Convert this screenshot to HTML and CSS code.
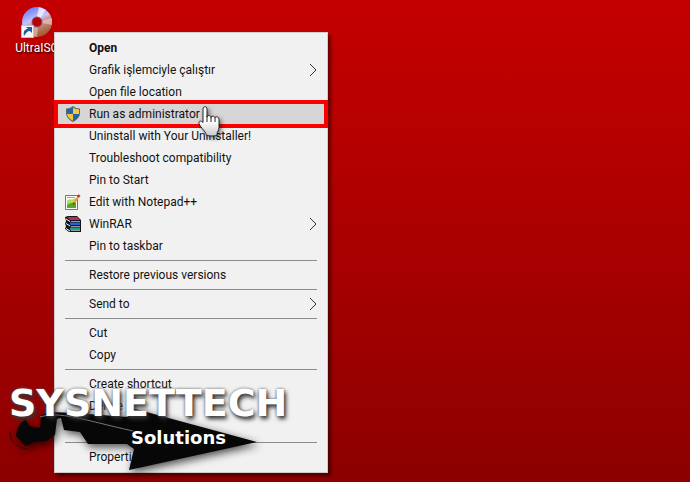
FILE: index.html
```html
<!DOCTYPE html>
<html lang="en">

<head>
    <meta charset="UTF-8">
    <meta name="viewport" content="width=device-width, initial-scale=1.0">
    <title>Desktop</title>
    <link rel="stylesheet" href="styles.css">
</head>

<body>
    <div class="desktop">
        <a class="shortcut" href="#">
            <svg class="disc" viewBox="0 0 32 32">
                <defs>
                    <linearGradient id="discfill" gradientUnits="userSpaceOnUse" x1="8" y1="3" x2="20" y2="30">
                        <stop offset="0" stop-color="#6f7df5"/>
                        <stop offset="0.4" stop-color="#c5c4ff"/>
                        <stop offset="0.55" stop-color="#c99a8c"/>
                        <stop offset="1" stop-color="#a4562f"/>
                    </linearGradient>
                </defs>
                <circle cx="16" cy="16" r="10" fill="none" stroke="url(#discfill)" stroke-width="10"/>
                <path d="M16 11L18 1L25 4L19 12z" fill="#fff" opacity=".7"/>
                <path d="M21 15L31 12V19L21 17z" fill="#f1d9e5" opacity=".5"/>
                <path d="M14 20L11 30L16 31L17 21z" fill="#f1d9c5" opacity=".5"/>
                <circle cx="16" cy="16" r="5" fill="#b30505" stroke="#8d5a7c"/>
                <path d="M.5 19.500h12v12h-12z" fill="#f4f8fc" stroke="#b8c4d0"/>
                <path d="M3 30C2 25 4 23 7 23L5 21H11V27L9 25C6 25 5 27 3 30z" fill="#1c5c9c"/>
            </svg>
            <span>UltraISO</span>
        </a>

        <ul class="menu">
            <li><button class="default">Open</button></li>
            <li><button>Grafik işlemciyle çalıştır
                <svg class="arrow" viewBox="0 0 8 14"><path d="M1 1l6 6-6 6"/></svg></button></li>
            <li><button>Open file location</button></li>
            <li><button class="active">
                <svg class="icon" viewBox="0 0 16 16">
                    <path d="M8 0C6 2 3 2.500 1 2.500V7c0 4 3 7 7 9 4-2 7-5 7-9V2.500C13 2.500 10 2 8 0z" fill="#5c6670"/>
                    <path d="M8 1.500C6 3 4 3.400 2 3.500V8h6z" fill="#1c66b4"/>
                    <path d="M8 1.500C10 3 12 3.400 14 3.500V8H8z" fill="#fbc736"/>
                    <path d="M2 8c.5 3 3 5.400 6 6.800V8z" fill="#fbc736"/>
                    <path d="M14 8c-.5 3-3 5.400-6 6.800V8z" fill="#1c66b4"/>
                </svg>Run as administrator</button></li>
            <li><button>Uninstall with Your Uninstaller!</button></li>
            <li><button>Troubleshoot compatibility</button></li>
            <li><button>Pin to Start</button></li>
            <li><button>
                <svg class="icon" viewBox="0 0 16 16">
                    <path d="M.5 1.500h12v14H.5z" fill="#fbfbf6" stroke="#777"/>
                    <path d="M2 6c3-1 6 0 9-2v9H2z" fill="#b6dd5c"/>
                    <path d="M2 11c3-3 6-1 9-4v7H2z" fill="#5da52a"/>
                    <path d="M2 3.500h8" stroke="#aaa"/>
                    <path d="M9 9l4-6" stroke="#e9a21c" stroke-width="2"/>
                    <path d="M13 3l1.500-2" stroke="#c22f35" stroke-width="2.500"/>
                    <path d="M8 11l.5-2.500 1.500 1z" fill="#333"/>
                </svg>Edit with Notepad++</button></li>
            <li><button>
                <svg class="icon" viewBox="0 0 16 16">
                    <path d="M0 1l3-1h9l4 4v12H4l-4-3 1-3-1-2 1-3z" fill="#151515"/>
                    <path d="M2 1h10l3 3H5z" fill="#b8286a"/>
                    <path d="M5 6.500h10v2.500H5z" fill="#2a5fd0"/>
                    <path d="M5 11.500h10v2.500H5z" fill="#12a68a"/>
                    <path d="M6 5.500h9M6 10.500h9M6 14.500h9" stroke="#999"/>
                    <path d="M1 3l4 2.500M1 7.500l4 2.500M1 12.500l4 2.500" stroke="#fff"/>
                </svg>WinRAR
                <svg class="arrow" viewBox="0 0 8 14"><path d="M1 1l6 6-6 6"/></svg></button></li>
            <li><button>Pin to taskbar</button></li>
            <li class="line"></li>
            <li><button>Restore previous versions</button></li>
            <li class="line"></li>
            <li><button>Send to
                <svg class="arrow" viewBox="0 0 8 14"><path d="M1 1l6 6-6 6"/></svg></button></li>
            <li class="line"></li>
            <li><button>Cut</button></li>
            <li><button>Copy</button></li>
            <li class="line"></li>
            <li><button>Create shortcut</button></li>
            <li><button>Delete</button></li>
            <li class="blank"></li>
            <li class="line"></li>
            <li><button>Properties</button></li>
        </ul>

        <!-- hand pointer -->
        <svg class="pointer" viewBox="0 0 24 32">
            <defs>
                <linearGradient id="handfill" x1="0" y1="0" x2="0" y2="1">
                    <stop offset="0.5" stop-color="#fff"/>
                    <stop offset="1" stop-color="#c8c8c8"/>
                </linearGradient>
            </defs>
            <path d="M6 3c0-3 4-3 4 0v8c0-2 4-2 4 .5 0-2 4-1.500 4 .5 0-2 4-1.500 4 1.500v8c0 3-2 4-2 7 0 2-10 2-11 0 0-3-5-6-7-11-.5-3 2-3 4-1z" fill="url(#handfill)" stroke="#222"/>
            <path d="M10 10v6M14 11v5M18 12v4" stroke="#222" fill="none"/>
        </svg>

        <!-- logo -->
        <div class="logo">
            <svg class="blade" viewBox="0 0 260 70">
                <path d="M7 33C8 24 12 18 17 16l3 7 11 2 1-13 10-3 24 1 53 4V4l129 35-128 28 5-21-7-5H79l-8-12-16-2-3-12-4 1-2 16-9 6-12 1-8 4z" fill="#070707"/>
                <path d="M31 14c20-6 40 2 93 14" fill="none" stroke="#777"/>
                <path d="M1 29c0 10 6 15 17 17" fill="none" stroke="#300"/>
            </svg>
            <span class="name">SYSNETTECH</span>
            <span class="sub">Solutions</span>
        </div>
    </div>
</body>

</html>
```
FILE: styles.css
```css
*{
    margin: 0;
    padding: 0;
    box-sizing: border-box;
}
li{
    list-style: none;
}
body{
    font-family: Roboto, "Open Sans", sans-serif;
    font-size: 12px;
}
.desktop{
    position: relative;
    min-height: 100vh;
    overflow: hidden;
    background: linear-gradient(#c40000, #b00000 40%, #8c0000);
}
.shortcut{
    display: flex;
    flex-direction: column;
    align-items: center;
    width: 74px;
    padding-top: 6px;
    color: #fff;
    text-decoration: none;
    text-shadow: 1px 1px 2px #000;
}
.disc{
    width: 32px;
    height: 32px;
}
.shortcut span{
    line-height: 20px;
}

/* context menu */
.menu{
    position: absolute;
    top: 32px;
    left: 54px;
    width: 274px;
    padding: 4px 2px;
    background-color: #f1f1f1;
    border: 1px solid #ccc;
    box-shadow: 3px 3px 3px rgba(0,0,0,.45);
}
.menu button{
    display: flex;
    align-items: center;
    position: relative;
    width: 100%;
    height: 22px;
    padding: 0 8px 0 32px;
    border: none;
    background: none;
    color: #111;
    font: inherit;
    text-align: left;
}
.menu .default{
    font-weight: bold;
}
.menu .active{
    background-color: #d6d6d6;
    outline: 4px solid #fb0000;
    outline-offset: -1px;
}
.menu .icon{
    width: 16px;
    height: 16px;
    margin-left: -24px;
    margin-right: 8px;
}
.menu .arrow{
    width: 8px;
    height: 14px;
    margin-left: auto;
    fill: none;
    stroke: #333;
}
.menu .blank{
    height: 22px;
}
.menu .line{
    height: 1px;
    margin: 3px 8px;
    background-color: #8c8c8c;
}

.pointer{
    position: absolute;
    top: 106px;
    left: 197px;
    width: 24px;
    height: 32px;
    filter: drop-shadow(2px 2px 2px rgba(0,0,0,.5));
}

/* logo over the menu */
.logo{
    position: absolute;
    top: 380px;
    left: 9px;
    color: #fff;
    font-family: "DejaVu Sans", sans-serif;
    font-weight: bold;
}
.logo span{
    display: block;
    position: relative;
}
.logo .name{
    font-size: 38px;
    line-height: 46px;
    text-shadow: 2px 3px 4px #333, 0 0 3px #666;
}
.logo .sub{
    padding-left: 122px;
    font-size: 18px;
    line-height: 24px;
}
.blade{
    position: absolute;
    top: 23px;
    left: 0;
    width: 260px;
    height: 70px;
    overflow: visible;
    filter: drop-shadow(2px 3px 4px rgba(0,0,0,.7));
}
```
